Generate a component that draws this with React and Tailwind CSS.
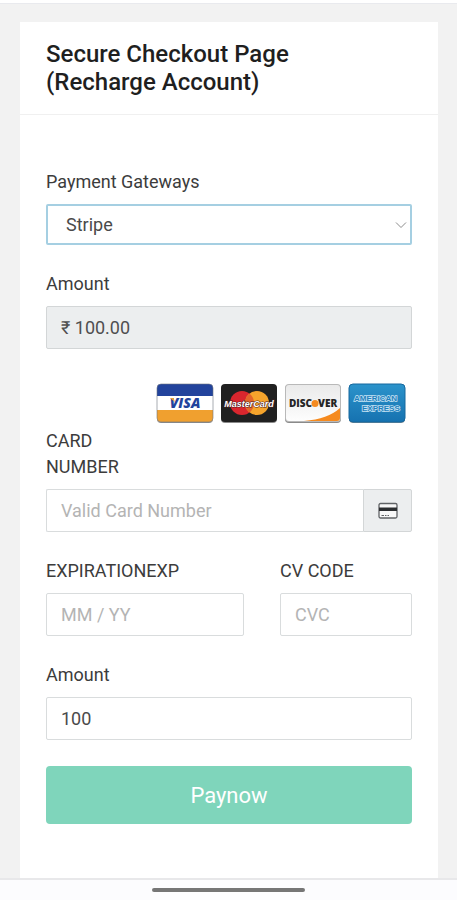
import React, { useState } from 'react';

const labelClass = 'block text-lg leading-[26px] text-[#3c3c3c]';
const inputClass =
  'block w-full min-w-0 h-[43px] px-[14px] rounded-xs border border-[#d9dcdd] bg-white text-lg text-[#4a4a4a] placeholder:text-[#b4b4b4] outline-none';

function VisaCard() {
  return (
    <svg viewBox="0 0 58 41" className="w-[58px] h-[41px]" role="img" aria-label="Visa">
      <defs>
        <clipPath id="visa-clip">
          <rect x="1" y="1" width="56" height="38" rx="4" />
        </clipPath>
      </defs>
      <rect x="1" y="2" width="56" height="38" rx="4" fill="#8f8f8f" />
      <g clipPath="url(#visa-clip)">
        <rect width="58" height="41" fill="#fff" />
        <rect width="58" height="13" fill="#22439c" />
        <rect y="27" width="58" height="14" fill="#f0a02f" />
      </g>
      <text x="29" y="25" textAnchor="middle" fontFamily="Open Sans, sans-serif" fontSize="14" fontWeight="800" fontStyle="italic" fill="#22439c">VISA</text>
      <path d="M14 15h3.500l1.500 4z" fill="#f0a02f" />
      <rect x="1" y="1" width="56" height="38" rx="4" fill="none" stroke="#6f7480" strokeOpacity="0.6" />
    </svg>
  );
}

function MasterCard() {
  return (
    <svg viewBox="0 0 58 41" className="w-[58px] h-[41px]" role="img" aria-label="MasterCard">
      <rect x="1" y="2" width="56" height="38" rx="4" fill="#8a8a8a" />
      <rect x="1" y="1" width="56" height="38" rx="4" fill="#202020" />
      <circle cx="22" cy="20" r="12" fill="#d9262e" />
      <circle cx="37" cy="20" r="12" fill="#f5a42c" />
      <path d="M29.500 10.600a12 12 0 0 1 0 18.800a12 12 0 0 1 0-18.800z" fill="#e2652b" />
      <text x="29" y="24" textAnchor="middle" fontFamily="Liberation Sans, Arial, sans-serif" fontSize="9" fontWeight="700" fontStyle="italic" fill="#fff" stroke="#4a2020" strokeWidth="1" paintOrder="stroke">MasterCard</text>
    </svg>
  );
}

function DiscoverCard() {
  return (
    <svg viewBox="0 0 58 41" className="w-[58px] h-[41px]" role="img" aria-label="Discover">
      <defs>
        <clipPath id="discover-clip">
          <rect x="2" y="2" width="54" height="36" rx="3" />
        </clipPath>
        <linearGradient id="discover-bg" x1="0" y1="0" x2="0" y2="1">
          <stop offset="0" stopColor="#e9e9e9" />
          <stop offset="1" stopColor="#fff" />
        </linearGradient>
      </defs>
      <rect x="1" y="2" width="56" height="38" rx="4" fill="#8a8a8a" />
      <rect x="1" y="1" width="56" height="38" rx="4" fill="#b9b9b9" />
      <g clipPath="url(#discover-clip)">
        <rect width="58" height="41" fill="url(#discover-bg)" />
        <path d="M20 38Q44 36 56 25V38z" fill="#f58a1f" />
      </g>
      <g fontFamily="Open Sans, sans-serif" fontSize="10" fontWeight="800" fill="#262626">
        <text x="28" y="24" textAnchor="end">DISC</text>
        <text x="34" y="24">VER</text>
      </g>
      <circle cx="31" cy="20.500" r="3.500" fill="#f58a1f" />
    </svg>
  );
}

function AmexCard() {
  return (
    <svg viewBox="0 0 58 41" className="w-[58px] h-[41px]" role="img" aria-label="American Express">
      <defs>
        <linearGradient id="amex-bg" x1="0" y1="0" x2="0" y2="1">
          <stop offset="0" stopColor="#2b93cb" />
          <stop offset="1" stopColor="#1672b0" />
        </linearGradient>
      </defs>
      <rect x="1" y="2" width="56" height="38" rx="4" fill="#7f8c95" />
      <rect x="1" y="1" width="56" height="38" rx="4" fill="url(#amex-bg)" stroke="#17689e" />
      <g fontFamily="Liberation Sans, Arial, sans-serif" fontSize="8" fontWeight="700" fill="#2080bd" stroke="#c4e2f3" strokeWidth="1.500" paintOrder="stroke">
        <text x="6" y="18">AMERICAN</text>
        <text x="14" y="28">EXPRESS</text>
      </g>
    </svg>
  );
}

function CardIcon() {
  return (
    <svg viewBox="0 0 20 18" className="w-5 h-[18px]" fill="none" aria-hidden="true">
      <rect x="1" y="1.500" width="18" height="14.500" rx="1.500" fill="#f8f8f8" stroke="#606366" strokeWidth="1.300" />
      <rect x="1" y="5.500" width="18" height="3.500" fill="#2c2e30" />
      <path d="M3.500 13.500h2.500M7 13.500h1.500M9.500 13.500h1.500" stroke="#606366" />
    </svg>
  );
}

function App() {
  const [gateway, setGateway] = useState('stripe');
  const [amount, setAmount] = useState('100');

  return (
    <div className="min-h-screen flex flex-col bg-[#f2f2f2] font-['Roboto',sans-serif]">
      <div className="h-1 bg-white border-b border-[#e9eaee]"></div>

      <main className="grow mt-[18px] ml-5 mr-[19px] bg-white">
        <header className="px-[26px] pt-[18px] pb-[18px] border-b border-[#f0f0f0]">
          <h1 className="text-2xl leading-[28px] font-medium text-[#1f1f1f]">
            Secure Checkout Page <br />
            (Recharge Account)
          </h1>
        </header>

        <form className="px-[26px] pt-[54px] pb-[53px]" onSubmit={(e) => e.preventDefault()}>
          <div className="mb-[26px]">
            <label htmlFor="gateway" className={labelClass}>Payment Gateways</label>
            <div className="relative mt-[9px]">
              <select
                id="gateway"
                value={gateway}
                onChange={(e) => setGateway(e.target.value)}
                className="block w-full h-[41px] pl-[18px] pr-8 appearance-none rounded-xs border-2 border-[#a5cfe2] bg-white text-lg text-[#4a4a4a] outline-none"
              >
                <option value="stripe">Stripe</option>
              </select>
              <svg viewBox="0 0 12 8" className="absolute right-[5px] top-[17px] w-3 h-2 pointer-events-none" fill="none" stroke="#8c8c8c" aria-hidden="true">
                <path d="M1 1.500l5 5l5-5" />
              </svg>
            </div>
          </div>

          <div>
            <label htmlFor="total" className={labelClass}>Amount</label>
            <input
              id="total"
              type="text"
              readOnly
              value="₹ 100.00"
              className="block w-full h-[43px] mt-[9px] px-[14px] rounded-xs border border-[#d3d6d7] bg-[#eceeef] text-lg text-[#4f4f4f] outline-none"
            />
          </div>

          <div className="flex justify-end gap-[6px] mt-[34px] mr-[6px]">
            <VisaCard />
            <MasterCard />
            <DiscoverCard />
            <AmexCard />
          </div>

          <div className="mt-1 mb-[26px]">
            <label htmlFor="card-number" className={`${labelClass} w-1/4`}>CARD NUMBER</label>
            <div className="flex mt-[9px]">
              <input id="card-number" type="text" placeholder="Valid Card Number" className={`${inputClass} rounded-r-none border-r-0`} />
              <span className="shrink-0 flex items-center justify-center w-[49px] h-[43px] rounded-r-xs border border-[#d3d6d7] bg-[#eceeef]">
                <CardIcon />
              </span>
            </div>
          </div>

          <div className="grid grid-cols-[3fr_2fr] gap-9 mb-[26px]">
            <div>
              <label htmlFor="expiry" className={labelClass}>EXPIRATIONEXP</label>
              <input id="expiry" type="text" placeholder="MM / YY" className={`${inputClass} mt-[9px]`} />
            </div>
            <div>
              <label htmlFor="cvc" className={labelClass}>CV CODE</label>
              <input id="cvc" type="text" placeholder="CVC" className={`${inputClass} mt-[9px]`} />
            </div>
          </div>

          <div>
            <label htmlFor="amount" className={labelClass}>Amount</label>
            <input
              id="amount"
              type="text"
              value={amount}
              onChange={(e) => setAmount(e.target.value)}
              className={`${inputClass} mt-[9px]`}
            />
          </div>

          <button type="submit" className="block w-full h-[58px] mt-[26px] rounded bg-[#7fd5bb] text-[22px] text-white">
            Paynow
          </button>
        </form>
      </main>

      <div className="flex justify-center h-[22px] pt-2 border-t-2 border-[#e8e8ea] bg-[#fcfcfe]">
        <div className="w-1/3 h-1 rounded-xs bg-[#767676]"></div>
      </div>
    </div>
  );
}

export default App;
